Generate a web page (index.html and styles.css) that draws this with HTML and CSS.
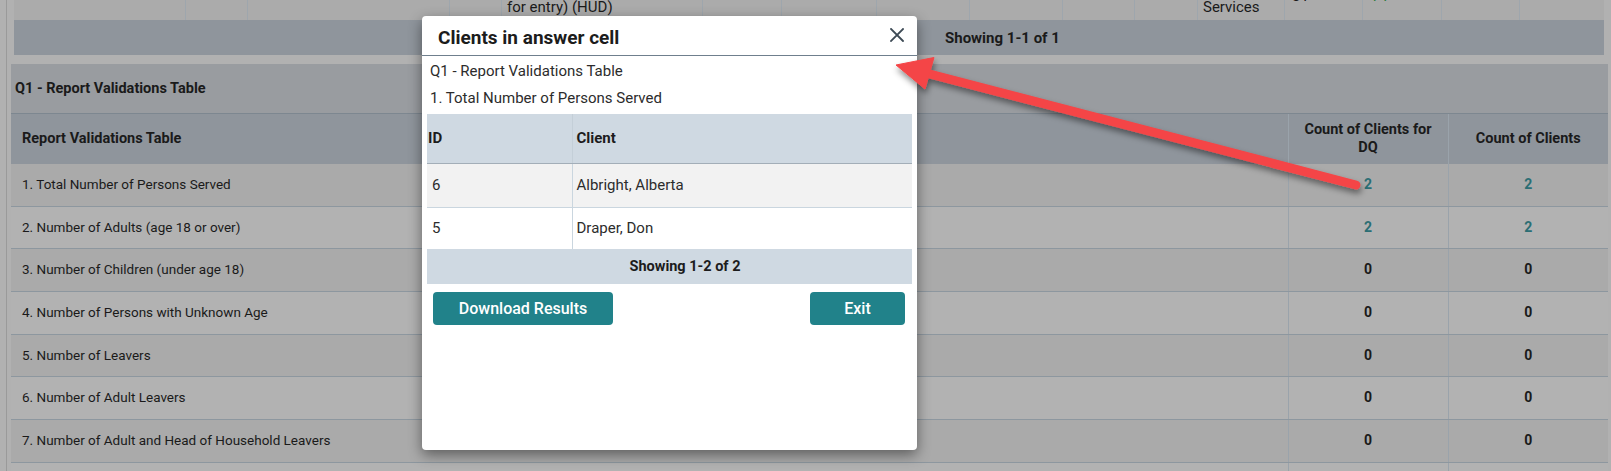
FILE: index.html
```html
<!DOCTYPE html>
<html lang="en">
<head>
<meta charset="utf-8">
<title>Report Validations</title>
<link rel="stylesheet" href="styles.css">
</head>
<body>
<div class="page">
  <div class="top-table">
    <div class="top-row">
      <div class="tc"></div>
      <div class="tc"></div>
      <div class="tc"><span class="tt sh-psh">PSH</span></div>
      <div class="tc"></div>
      <div class="tc"><span class="tt sh-mid">for entry) (HUD)</span></div>
      <div class="tc"></div>
      <div class="tc"></div>
      <div class="tc"></div>
      <div class="tc"></div>
      <div class="tc"></div>
      <div class="tc"></div>
      <div class="tc"><span class="tt sh-mid">Services</span></div>
      <div class="tc"><span class="tt sh-num">31</span></div>
      <div class="tc"><span class="tt sh-app green">pp</span></div>
      <div class="tc"></div>
      <div class="tc"></div>
    </div>
    <div class="top-footer">Showing 1-1 of 1</div>
  </div>

  <section class="report">
    <div class="report-title">Q1 - Report Validations Table</div>
    <table class="vt">
      <thead>
        <tr>
          <th class="c-name">Report Validations Table</th>
          <th class="c-num">Count of Clients for<br>DQ</th>
          <th class="c-num">Count of Clients</th>
        </tr>
      </thead>
      <tbody>
        <tr><td class="c-name">1. Total Number of Persons Served</td><td class="c-num link">2</td><td class="c-num link">2</td></tr>
        <tr><td class="c-name">2. Number of Adults (age 18 or over)</td><td class="c-num link">2</td><td class="c-num link">2</td></tr>
        <tr><td class="c-name">3. Number of Children (under age 18)</td><td class="c-num">0</td><td class="c-num">0</td></tr>
        <tr><td class="c-name">4. Number of Persons with Unknown Age</td><td class="c-num">0</td><td class="c-num">0</td></tr>
        <tr><td class="c-name">5. Number of Leavers</td><td class="c-num">0</td><td class="c-num">0</td></tr>
        <tr><td class="c-name">6. Number of Adult Leavers</td><td class="c-num">0</td><td class="c-num">0</td></tr>
        <tr><td class="c-name">7. Number of Adult and Head of Household Leavers</td><td class="c-num">0</td><td class="c-num">0</td></tr>
        <tr><td class="c-name">8. Number of Stayers</td><td class="c-num">0</td><td class="c-num">0</td></tr>
      </tbody>
    </table>
  </section>
</div>

<div class="modal" role="dialog" aria-label="Clients in answer cell">
  <div class="modal-header">
    <h2 class="modal-title">Clients in answer cell</h2>
    <svg class="close" width="14" height="14" viewBox="0 0 14 14" aria-hidden="true">
      <path d="M1 1 L13 13 M13 1 L1 13" stroke="#3d4a55" stroke-width="1.8" fill="none" stroke-linecap="square"/>
    </svg>
  </div>
  <div class="modal-body">
    <div class="crumb">Q1 - Report Validations Table</div>
    <div class="crumb">1. Total Number of Persons Served</div>
    <table class="ct">
      <thead>
        <tr><th class="c-id">ID</th><th>Client</th></tr>
      </thead>
      <tbody>
        <tr class="alt"><td class="c-id">6</td><td>Albright, Alberta</td></tr>
        <tr><td class="c-id">5</td><td>Draper, Don</td></tr>
      </tbody>
      <tfoot>
        <tr><td colspan="2">Showing 1-2 of 2</td></tr>
      </tfoot>
    </table>
    <div class="actions">
      <button class="btn btn-dl">Download Results</button>
      <button class="btn btn-exit">Exit</button>
    </div>
  </div>
</div>

<svg class="annot" width="1611" height="471" viewBox="0 0 1611 471" aria-hidden="true">
  <defs>
    <filter id="sh" x="-10%" y="-30%" width="120%" height="160%">
      <feDropShadow dx="1" dy="4" stdDeviation="3" flood-color="#000" flood-opacity="0.45"/>
    </filter>
  </defs>
  <g filter="url(#sh)" fill="#f44546" stroke="#f44546">
    <line x1="922" y1="72" x2="1356" y2="185" stroke-width="9" stroke-linecap="round"/>
    <polygon points="896,65 934,57.5 925,89" stroke-width="1" stroke-linejoin="round"/>
  </g>
</svg>
</body>
</html>
```

FILE: styles.css
```css
* { box-sizing: border-box; }

html, body {
  margin: 0;
  padding: 0;
}

body {
  width: 1611px;
  height: 471px;
  overflow: hidden;
  position: relative;
  background: #b1b1b1;
  font-family: Roboto, "Liberation Sans", Arial, sans-serif;
  color: #1a1a1a;
}

.page {
  margin-left: 6px;
  margin-right: 3px;
  border-left: 1px solid #9a9a9a;
  padding-left: 4px;
  min-height: 471px;
}

/* ---- top (previous) table ---- */
.top-table {
  margin-left: 3px;
  margin-right: 4px;
}

.top-row {
  display: grid;
  grid-template-columns: 172px 62px 202px 52px 201px 79px 95px 93px 93px 72px 63px 87px 78px 79px 78px 1fr;
  height: 20px;
  overflow: hidden;
  background: #ababab;
}

.tc {
  border-right: 1px solid #9ea6ad;
  padding-left: 5px;
  overflow: hidden;
  font-size: 15px;
  line-height: 17px;
  white-space: nowrap;
}

.tc:last-child { border-right: none; }

.tt { display: block; }
.sh-psh { margin-top: -14px; }
.sh-mid { margin-top: -1px; }
.sh-num { margin-top: -12px; padding-left: 2px; }
.sh-app { margin-top: -15px; padding-left: 5px; letter-spacing: 2px; }
.green { color: #2d7a3a; }

.top-footer {
  height: 35px;
  background: #8f959c;
  display: flex;
  align-items: center;
  padding-left: 931px;
  font-size: 15px;
  font-weight: 700;
}

/* ---- report section ---- */
.report {
  margin-top: 9px;
  background: #999ca0;
}

.report-title {
  height: 49px;
  display: flex;
  align-items: center;
  padding-left: 4px;
  font-size: 14.5px;
  font-weight: 700;
}

.vt {
  width: 100%;
  border-collapse: collapse;
  table-layout: fixed;
  font-size: 13.5px;
}

.vt th {
  background: #8f959c;
  height: 50px;
  border-top: 1px solid #7d8790;
  font-size: 14.5px;
  font-weight: 700;
  line-height: 18px;
  padding: 0;
}

.vt th.c-name, .vt td.c-name {
  text-align: left;
  padding-left: 11px;
}

.vt .c-num {
  width: 160px;
  text-align: center;
  border-left: 1px solid #9aa3ab;
}

.vt td {
  height: 42.7px;
  border-bottom: 1px solid #8d979f;
  padding: 0 0 2px;
}

.vt tbody tr:nth-child(odd) td { background: #aaaaaa; }
.vt tbody tr:nth-child(even) td { background: #b2b2b2; }

.vt td.c-num {
  font-size: 14px;
  font-weight: 700;
}

.vt td.link { color: #2b6e74; }

/* ---- modal ---- */
.modal {
  position: absolute;
  left: 422px;
  top: 16px;
  width: 495px;
  height: 434px;
  background: #ffffff;
  border-radius: 4px;
  box-shadow: 0 5px 14px rgba(0, 0, 0, 0.45);
  z-index: 10;
}

.modal-header {
  height: 40px;
  border-bottom: 1px solid #6f7f8d;
  display: flex;
  align-items: center;
  justify-content: space-between;
  padding: 3px 13px 0 16px;
}

.modal-title {
  margin: 0;
  font-size: 19px;
  font-weight: 700;
  color: #1c1c1c;
}

.close { display: block; margin-top: -4px; }

.modal-body {
  padding: 2px 5px 0;
}

.crumb {
  height: 27px;
  line-height: 27px;
  padding-left: 3px;
  font-size: 15px;
  color: #2c2c2c;
}

.ct {
  width: 485px;
  margin-top: 2px;
  border-collapse: collapse;
  table-layout: fixed;
  font-size: 15px;
  color: #2c2c2c;
}

.ct th {
  height: 49px;
  background: #cfd9e2;
  text-align: left;
  font-weight: 700;
  padding: 0 0 0 4px;
  border-bottom: 1px solid #a3aeb8;
  color: #1c1c1c;
}

.ct th.c-id { padding-left: 1px; }

.ct .c-id {
  width: 145px;
  border-right: 1px solid #cad6df;
}

.ct th.c-id { border-right-color: #c4cfd8; }

.ct tbody td {
  height: 43px;
  padding: 0 0 0 4px;
  border-bottom: 1px solid #cad6df;
}

.ct tbody td.c-id { padding-left: 5px; }

.ct tbody tr.alt td { background: #f2f2f2; height: 44px; }
.ct tbody tr:last-child td { height: 42px; border-bottom: none; }

.ct tfoot td {
  height: 35px;
  background: #cfd9e2;
  text-align: center;
  padding-left: 32px;
  font-size: 14.5px;
  font-weight: 700;
  color: #1c1c1c;
}

.actions {
  display: flex;
  justify-content: space-between;
  margin-top: 8px;
  padding: 0 7px 0 6px;
}

.btn {
  height: 33px;
  border: none;
  border-radius: 4px;
  background: #21828a;
  color: #ffffff;
  font-family: Roboto, "Liberation Sans", Arial, sans-serif;
  font-size: 16px;
  font-weight: 500;
  padding: 0;
}

.btn-dl { width: 180px; }
.btn-exit { width: 95px; }

/* ---- annotation arrow ---- */
.annot {
  position: absolute;
  left: 0;
  top: 0;
  pointer-events: none;
  z-index: 20;
}
```
